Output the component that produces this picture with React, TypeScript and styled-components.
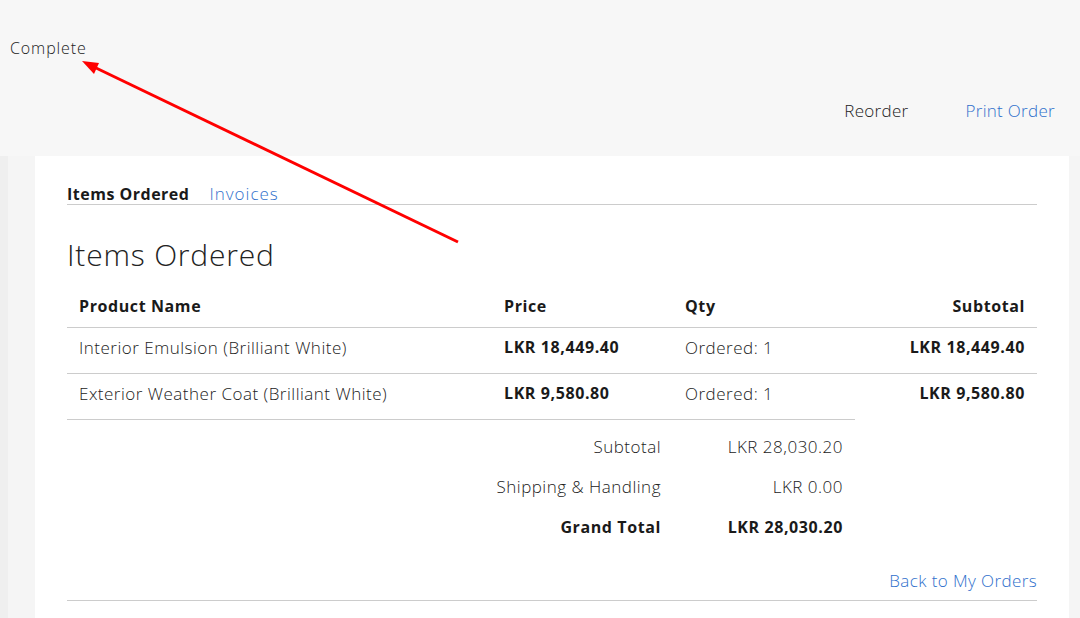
import React from 'react';
import styled, { createGlobalStyle } from 'styled-components';

const GlobalStyle = createGlobalStyle`
    html, body {
        margin: 0;
        padding: 0;
        background: #f5f5f5;
    }
    body {
        font-family: 'Open Sans', 'DejaVu Sans', sans-serif;
        font-weight: 300;
        font-size: 17px;
        letter-spacing: 0.5px;
        color: #222;
    }
    * {
        box-sizing: border-box;
    }
`;

const LINK = '#2f70cc';

const Page = styled.div`
    position: relative;
    width: 1080px;
    min-height: 618px;
    overflow: hidden;
`;

const Header = styled.div`
    height: 156px;
    background: #f7f7f7;
    padding: 38px 25px 0 10px;
`;

const Status = styled.div`
    font-size: 16px;
    line-height: 20px;
    letter-spacing: 0.9px;
    color: #222;
`;

const Actions = styled.div`
    display: flex;
    justify-content: flex-end;
    gap: 57px;
    margin-top: 43px;
`;

const ActionLink = styled.a<{ $primary?: boolean }>`
    font-size: 17px;
    line-height: 20px;
    letter-spacing: 0.3px;
    color: ${({ $primary }) => ($primary ? LINK : '#222')};
    text-decoration: none;
`;

const Body = styled.div`
    display: flex;
    background: #f5f5f5;
    min-height: 462px;
`;

const SideStrip = styled.div`
    width: 8px;
    background: #efefef;
    margin-right: 27px;
`;

const Card = styled.div`
    width: 1034px;
    background: #fff;
    padding: 0 32px;
`;

const Tabs = styled.div`
    display: flex;
    gap: 20px;
    padding-top: 28px;
    border-bottom: 1px solid #ccc;
`;

const Tab = styled.a<{ $active?: boolean }>`
    font-size: ${({ $active }) => ($active ? '16px' : '17px')};
    line-height: 20px;
    letter-spacing: ${({ $active }) => ($active ? '0.5px' : '1px')};
    font-weight: ${({ $active }) => ($active ? 700 : 300)};
    color: ${({ $active }) => ($active ? '#1a1a1a' : LINK)};
    text-decoration: none;
`;

const Title = styled.h2`
    margin: 32px 0 0;
    font-size: 30px;
    line-height: 36px;
    letter-spacing: 0.8px;
    font-weight: 300;
    color: #222;
`;

const Table = styled.div`
    margin-top: 9px;
`;

const Row = styled.div<{ $noBorder?: boolean; $head?: boolean }>`
    display: grid;
    grid-template-columns: 425px 181px 182px 1fr;
    padding: ${({ $head }) => ($head ? '14px 0 10px' : '9px 0 15px')};
    border-bottom: ${({ $noBorder }) => ($noBorder ? 'none' : '1px solid #ccc')};
`;

const Cell = styled.div<{ $bold?: boolean; $right?: boolean }>`
    padding: 0 12px;
    line-height: 21px;
    font-size: ${({ $bold }) => ($bold ? '16px' : '17px')};
    letter-spacing: ${({ $bold }) => ($bold ? '0.6px' : '0.5px')};
    font-weight: ${({ $bold }) => ($bold ? 700 : 300)};
    color: ${({ $bold }) => ($bold ? '#1a1a1a' : '#222')};
    text-align: ${({ $right }) => ($right ? 'right' : 'left')};
    white-space: nowrap;
`;

const Totals = styled.div`
    width: 788px;
    border-top: 1px solid #ccc;
    padding-top: 7px;
`;

const TotalRow = styled.div`
    display: grid;
    grid-template-columns: 1fr 182px;
    height: 40px;
    align-items: center;
`;

const TotalCell = styled.div<{ $bold?: boolean }>`
    padding: 0 12px;
    text-align: right;
    font-size: ${({ $bold }) => ($bold ? '16px' : '17px')};
    letter-spacing: ${({ $bold }) => ($bold ? '0.6px' : '0.5px')};
    line-height: 20px;
    font-weight: ${({ $bold }) => ($bold ? 700 : 300)};
    color: ${({ $bold }) => ($bold ? '#1a1a1a' : '#222')};
`;

const Toolbar = styled.div`
    display: flex;
    justify-content: flex-end;
    margin-top: 24px;
    padding-bottom: 9px;
    border-bottom: 1px solid #ccc;
`;

const BackLink = styled.a`
    font-size: 17px;
    line-height: 20px;
    letter-spacing: 0.4px;
    color: ${LINK};
    text-decoration: none;
`;

const Annotation = styled.svg`
    position: absolute;
    left: 0;
    top: 0;
    width: 1080px;
    height: 618px;
    pointer-events: none;
`;

const items = [
    { name: 'Interior Emulsion (Brilliant White)', price: 'LKR 18,449.40', qty: 'Ordered: 1', subtotal: 'LKR 18,449.40' },
    { name: 'Exterior Weather Coat (Brilliant White)', price: 'LKR 9,580.80', qty: 'Ordered: 1', subtotal: 'LKR 9,580.80' },
];

const totals = [
    { label: 'Subtotal', value: 'LKR 28,030.20' },
    { label: 'Shipping & Handling', value: 'LKR 0.00' },
    { label: 'Grand Total', value: 'LKR 28,030.20', bold: true },
];

const App = () => {
    return (
        <Page>
            <GlobalStyle />
            <Header>
                <Status>Complete</Status>
                <Actions>
                    <ActionLink href="#">Reorder</ActionLink>
                    <ActionLink href="#" $primary>
                        Print Order
                    </ActionLink>
                </Actions>
            </Header>
            <Body>
                <SideStrip />
                <Card>
                    <Tabs>
                        <Tab $active>Items Ordered</Tab>
                        <Tab href="#">Invoices</Tab>
                    </Tabs>
                    <Title>Items Ordered</Title>
                    <Table>
                        <Row $head>
                            <Cell $bold>Product Name</Cell>
                            <Cell $bold>Price</Cell>
                            <Cell $bold>Qty</Cell>
                            <Cell $bold $right>
                                Subtotal
                            </Cell>
                        </Row>
                        {items.map((item, i) => (
                            <Row key={item.name} $noBorder={i === items.length - 1}>
                                <Cell>{item.name}</Cell>
                                <Cell $bold>{item.price}</Cell>
                                <Cell>{item.qty}</Cell>
                                <Cell $bold $right>
                                    {item.subtotal}
                                </Cell>
                            </Row>
                        ))}
                    </Table>
                    <Totals>
                        {totals.map(t => (
                            <TotalRow key={t.label}>
                                <TotalCell $bold={t.bold}>{t.label}</TotalCell>
                                <TotalCell $bold={t.bold}>{t.value}</TotalCell>
                            </TotalRow>
                        ))}
                    </Totals>
                    <Toolbar>
                        <BackLink href="#">Back to My Orders</BackLink>
                    </Toolbar>
                </Card>
            </Body>
            <Annotation viewBox="0 0 1080 618">
                <line x1="458" y1="242" x2="94" y2="67" stroke="#f00" strokeWidth="3" />
                <polygon points="82,61 99,63 94,74" fill="#f00" />
            </Annotation>
        </Page>
    );
};

export default App;
